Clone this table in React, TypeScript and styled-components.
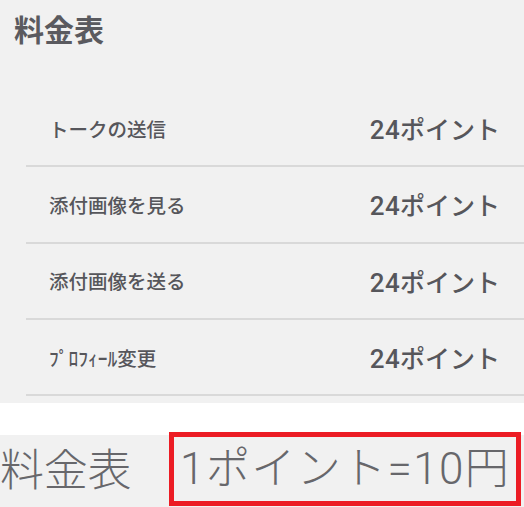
import React from 'react';
import styled, { createGlobalStyle } from 'styled-components';

const GlobalStyle = createGlobalStyle`
  html, body {
    margin: 0;
    padding: 0;
    background: #ffffff;
  }
  body {
    font-family: "Noto Sans CJK JP", "Noto Sans", sans-serif;
    color: #56565b;
  }
`;

const Page = styled.div`
  width: 524px;
  height: 507px;
  overflow: hidden;
  display: flex;
  flex-direction: column;
`;

const PricePanel = styled.section`
  background: #f1f1f1;
  height: 403px;
  display: flex;
  flex-direction: column;
`;

const Title = styled.h1`
  margin: 0;
  padding: 10px 0 0 14px;
  height: 91px;
  box-sizing: border-box;
  font-size: 30px;
  line-height: 36px;
  font-weight: 700;
  color: #5a5a5f;
`;

const List = styled.ul`
  list-style: none;
  margin: 0 0 0 26px;
  padding: 0;
`;

const Row = styled.li`
  height: 74.3px;
  border-bottom: 2px solid #d9d9d9;
  display: flex;
  align-items: center;
  justify-content: space-between;
  padding: 0 24px 0 23px;
`;

const Label = styled.span`
  font-size: 19.5px;
  font-weight: 500;
  color: #56565b;
`;

const Cost = styled.span`
  font-size: 25px;
  font-weight: 500;
  color: #56565b;
`;

const Digits = styled.span`
  font-family: Roboto, "Liberation Sans", sans-serif;
  font-weight: 500;
  font-size: 26px;
  letter-spacing: 0.3px;
`;

const Spacer = styled.div`
  height: 32px;
  background: #ffffff;
`;

const RateBar = styled.section`
  background: #f1f1f1;
  height: 72px;
  display: flex;
  align-items: flex-start;
`;

const BigText = styled.span<{ $spacing?: number }>`
  font-family: Roboto, "Noto Sans CJK JP", sans-serif;
  font-size: 44px;
  font-weight: 300;
  line-height: 72px;
  color: #67676b;
  letter-spacing: ${(p) => p.$spacing ?? -0.3}px;
`;

const RateBox = styled.div`
  margin: -3px 0 0 38px;
  height: 74px;
  width: 352px;
  box-sizing: border-box;
  border: 5px solid #ec1c24;
  display: flex;
  align-items: center;
  padding: 0 0 0 6px;
`;

const rows = [
  { label: 'トークの送信', points: '24' },
  { label: '添付画像を見る', points: '24' },
  { label: '添付画像を送る', points: '24' },
  { label: 'ﾌﾟﾛﾌｨｰﾙ変更', points: '24' },
];

export default function App() {
  return (
    <>
      <GlobalStyle />
      <Page>
        <PricePanel>
          <Title>料金表</Title>
          <List>
            {rows.map((r) => (
              <Row key={r.label}>
                <Label>{r.label}</Label>
                <Cost>
                  <Digits>{r.points}</Digits>ポイント
                </Cost>
              </Row>
            ))}
          </List>
        </PricePanel>
        <Spacer />
        <RateBar>
          <BigText>料金表</BigText>
          <RateBox>
            <BigText $spacing={1.4}>1ポイント=10円</BigText>
          </RateBox>
        </RateBar>
      </Page>
    </>
  );
}
